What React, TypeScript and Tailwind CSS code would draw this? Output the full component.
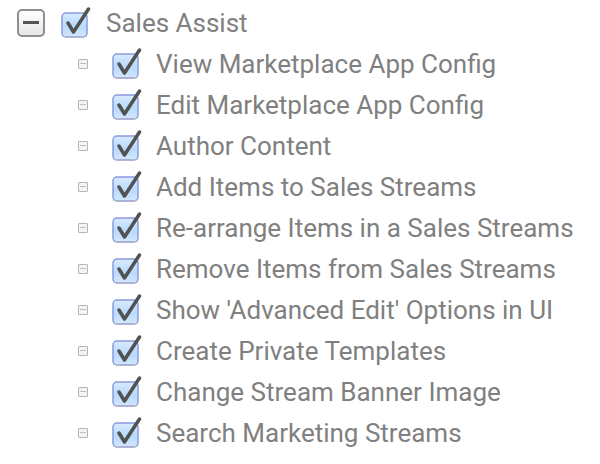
import { useId } from "react";

const items = [
  "View Marketplace App Config",
  "Edit Marketplace App Config",
  "Author Content",
  "Add Items to Sales Streams",
  "Re-arrange Items in a Sales Streams",
  "Remove Items from Sales Streams",
  "Show 'Advanced Edit' Options in UI",
  "Create Private Templates",
  "Change Stream Banner Image",
  "Search Marketing Streams",
];

function CheckBox() {
  const id = useId();
  return (
    <svg width="30" height="32" viewBox="0 0 30 32" className="shrink-0">
      <defs>
        <linearGradient id={id} x1="0" y1="0" x2="0" y2="1">
          <stop offset="0" stopColor="#d8ebff" />
          <stop offset="0.55" stopColor="#b8dafb" />
          <stop offset="1" stopColor="#d3e8fc" />
        </linearGradient>
      </defs>
      <rect x="1" y="6" width="25" height="24" rx="4" fill={`url(#${id})`} stroke="#8a9ae0" strokeWidth="1.5" />
      <path d="M1.5 29.5 Q13.5 31.5 25.5 29.5" fill="none" stroke="#b8b8c8" strokeWidth="1" />
      <path d="M7 16 L12.5 25 L27.5 2" fill="none" stroke="#525252" strokeWidth="3.5" strokeLinecap="round" strokeLinejoin="round" />
    </svg>
  );
}

function Collapse() {
  return (
    <div className="flex h-[28px] w-[28px] shrink-0 items-center justify-center rounded-[5px] border-2 border-[#8f8f8f] bg-gradient-to-b from-white to-[#e6e6e6]">
      <div className="h-[3px] w-[16px] bg-[#555]" />
    </div>
  );
}

function Leaf() {
  return (
    <div className="flex h-[10px] w-[10px] shrink-0 items-center justify-center rounded-[1px] border border-[#b5b5b5] bg-[#f4f4f4]">
      <div className="h-px w-[6px] bg-[#bdbdbd]" />
    </div>
  );
}

export default function App() {
  return (
    <div className="h-[464px] w-[600px] bg-white pt-[2px] text-[26px] text-[#808080]" style={{ fontFamily: "Roboto, sans-serif" }}>
      <div className="flex h-[41px] items-center pl-[17px]">
        <Collapse />
        <div className="ml-[16px]">
          <CheckBox />
        </div>
        <span className="ml-[15px] leading-none">Sales Assist</span>
      </div>
      {items.map((label) => (
        <div key={label} className="flex h-[41px] items-center pl-[78px]">
          <Leaf />
          <div className="ml-[24px]">
            <CheckBox />
          </div>
          <span className="ml-[14px] leading-none">{label}</span>
        </div>
      ))}
    </div>
  );
}
